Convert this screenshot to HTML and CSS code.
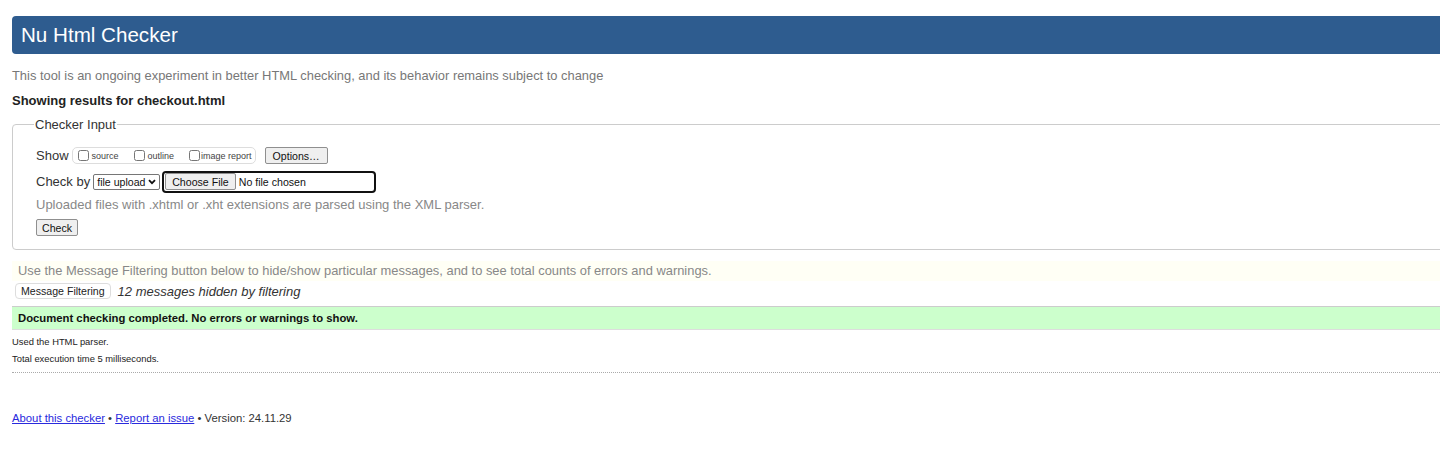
FILE: index.html
```html
<!DOCTYPE html>
<html>
<head>
<meta charset="utf-8">
<title>Nu Html Checker</title>
<link rel="stylesheet" href="styles.css">
</head>
<body>
<div class="page">
  <h1 class="header">Nu Html Checker</h1>
  <p class="intro">This tool is an ongoing experiment in better HTML checking, and its behavior remains subject to change</p>
  <p class="showing">Showing results for checkout.html</p>
  <fieldset class="input">
    <legend>Checker Input</legend>
    <div class="row">
      <span class="lbl">Show</span>
      <span class="group">
        <label class="opt"><input type="checkbox" class="gap">source</label>
        <label class="opt"><input type="checkbox" class="gap">outline</label>
        <label class="opt last"><input type="checkbox">image report</label>
      </span>
      <button class="btn options">Options…</button>
    </div>
    <div class="row row2">
      <span class="lbl">Check by</span>
      <span class="sel">file upload<svg class="chev" width="8" height="6" viewBox="0 0 8 6"><path d="M1 1.2 L4 4.2 L7 1.2" fill="none" stroke="#111" stroke-width="1.8"/></svg></span>
      <span class="file"><button class="btn choose">Choose File</button><span class="nofile">No file chosen</span></span>
    </div>
    <p class="note">Uploaded files with .xhtml or .xht extensions are parsed using the XML parser.</p>
    <button class="btn check">Check</button>
  </fieldset>
  <p class="filter-note">Use the Message Filtering button below to hide/show particular messages, and to see total counts of errors and warnings.</p>
  <div class="filter-row">
    <button class="btn mf">Message Filtering</button>
    <em class="hidden">12 messages hidden by filtering</em>
  </div>
  <p class="success">Document checking completed. No errors or warnings to show.</p>
  <p class="small">Used the HTML parser.</p>
  <p class="small">Total execution time 5 milliseconds.</p>
  <hr class="dots">
  <p class="footer"><a href="#">About this checker</a> • <a href="#">Report an issue</a> • Version: 24.11.29</p>
</div>
</body>
</html>
```
FILE: styles.css
```css
html, body {
  margin: 0;
  padding: 0;
  background: #fff;
  overflow: hidden;
}
body {
  font-family: "Liberation Sans", Arial, sans-serif;
  color: #222;
}
.page {
  padding: 16px 0 0 12px;
  width: 1460px;
}
.header {
  margin: 0;
  height: 38px;
  line-height: 38px;
  background: #2e5c8f;
  color: #fff;
  font-weight: normal;
  font-size: 20.6px;
  padding-left: 9px;
  border-radius: 4px;
}
.intro {
  margin: 14px 0 0;
  font-size: 12.9px;
  line-height: 16px;
  color: #777;
}
.showing {
  margin: 9px 0 0;
  font-size: 13px;
  line-height: 16px;
  font-weight: bold;
  color: #222;
}
.input {
  margin: 8px 0 0;
  border: 1px solid #ccc;
  border-radius: 4px;
  padding: 15px 23px 13px;
  min-width: 0;
}
.input legend {
  font-size: 13px;
  color: #333;
  padding: 0 1px;
  margin-left: -2px;
}
.row {
  display: flex;
  align-items: center;
  font-size: 13px;
  color: #333;
  height: 17px;
}
.row2 {
  margin-top: 9px;
}
.lbl {
  margin-right: 3px;
}
.group {
  display: inline-flex;
  align-items: center;
  border: 1px solid #ddd;
  border-radius: 5px;
  height: 15px;
  padding: 0 3px 0 5px;
  font-size: 9px;
  color: #444;
}
.opt {
  display: inline-flex;
  align-items: center;
  margin-right: 15px;
}
.opt.last {
  margin-right: 0;
}
.opt input {
  width: 11px;
  height: 11px;
  margin: 0 1px 0 0;
}
.opt input.gap {
  margin-right: 3px;
}
.btn {
  font-family: "Liberation Sans", Arial, sans-serif;
  font-size: 10.6px;
  color: #111;
  background: #efefef;
  border: 1px solid #8f8f8f;
  border-radius: 2px;
  padding: 0 6px;
  height: 16px;
}
.options {
  margin-left: 9px;
  height: 17px;
  padding: 0 7px;
}
.sel {
  display: inline-flex;
  align-items: center;
  box-sizing: border-box;
  font-size: 10.6px;
  height: 16px;
  padding: 0 2px 0 3px;
  border: 1px solid #767676;
  border-radius: 2px;
  background: #fff;
  color: #111;
  width: 67px;
  white-space: nowrap;
}
.chev {
  margin-left: 2px;
}
.file {
  display: inline-flex;
  align-items: center;
  margin-left: 2px;
  width: 209px;
  height: 18px;
  border: 2px solid #111;
  border-radius: 4px;
  padding-left: 1px;
  font-size: 10.6px;
  color: #111;
}
.choose {
  height: 17px;
  margin-right: 3px;
}
.note {
  margin: 7px 0 0;
  font-size: 13px;
  line-height: 16px;
  color: #888;
}
.check {
  margin-top: 6px;
  height: 17px;
  padding: 0 5px;
}
.filter-note {
  margin: 11px 0 0;
  background: #fffff5;
  font-size: 12.9px;
  line-height: 20px;
  padding: 0 6px;
  color: #888;
}
.filter-row {
  display: flex;
  align-items: center;
  margin-top: 2px;
  padding-left: 3px;
  height: 16px;
}
.mf {
  font-size: 10.6px;
  background: #fff;
  border: 1px solid #ddd;
  border-radius: 4px;
  height: 16px;
  padding: 0 5px;
  color: #222;
}
.hidden {
  font-size: 13px;
  margin-left: 7px;
  color: #333;
}
.success {
  margin: 7px 0 0;
  background: #ccffcc;
  border-top: 1px solid #ccc;
  border-bottom: 1px solid #ddd;
  font-size: 11.3px;
  font-weight: bold;
  line-height: 22px;
  padding: 0 6px;
  color: #111;
}
.small {
  margin: 5px 0 0;
  font-size: 9.4px;
  line-height: 13px;
  color: #222;
}
.small + .small {
  margin-top: 4px;
}
.dots {
  margin: 7px 0 0;
  border: 0;
  border-top: 1px dotted #aaa;
  height: 0;
}
.footer {
  margin: 38px 0 0;
  font-size: 11.3px;
  line-height: 14px;
  color: #333;
}
.footer a {
  color: #2a2add;
}
```
